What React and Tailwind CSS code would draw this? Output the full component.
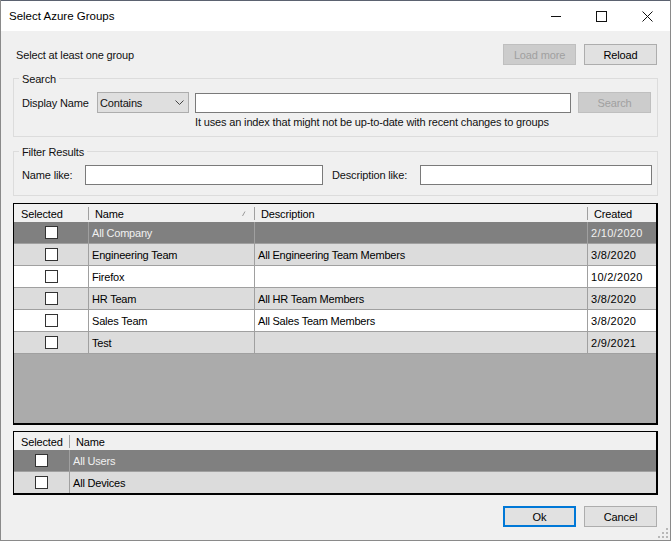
import React from "react";

const groups = [
  { name: "All Company", description: "", created: "2/10/2020", kind: "selected" },
  { name: "Engineering Team", description: "All Engineering Team Members", created: "3/8/2020", kind: "alt" },
  { name: "Firefox", description: "", created: "10/2/2020", kind: "plain" },
  { name: "HR Team", description: "All HR Team Members", created: "3/8/2020", kind: "alt" },
  { name: "Sales Team", description: "All Sales Team Members", created: "3/8/2020", kind: "plain" },
  { name: "Test", description: "", created: "2/9/2021", kind: "alt" },
];

const rowColors = {
  selected: "bg-[#808080] text-[#f0f0f0]",
  alt: "bg-[#dcdcdc] text-black",
  plain: "bg-white text-black",
};

function Checkbox() {
  return <span className="block w-[13px] h-[13px] bg-white border border-[#333333]" />;
}

function Cell({ className = "", children }) {
  return (
    <div className={`h-[22px] flex items-center border-b border-r border-[#a0a0a0] overflow-hidden whitespace-nowrap tracking-[-0.2px] ${className}`}>
      {children}
    </div>
  );
}

function HeaderCell({ className = "", children }) {
  return <div className={`relative h-[18px] pt-[2px] flex items-center bg-[#f0f0f0] text-black whitespace-nowrap ${className}`}>{children}</div>;
}

function HeaderDivider() {
  return <span className="absolute -left-px top-[3px] h-[13px] w-px bg-[#a0a0a0]" />;
}

function WinButton({ children, disabled, primary, className = "" }) {
  const look = primary
    ? "border-2 border-[#0078d7] bg-[#e1e1e1] text-black"
    : disabled
      ? "border border-[#bfbfbf] bg-[#cccccc] text-[#a0a0a0]"
      : "border border-[#adadad] bg-[#e1e1e1] text-black";
  return <button className={`w-[73px] h-[21px] flex items-center justify-center ${look} ${className}`}>{children}</button>;
}

function TextBox({ className = "" }) {
  return <div className={`h-[20px] bg-white border border-[#7a7a7a] ${className}`} />;
}

export default function App() {
  return (
    <div className="w-[671px] h-[541px] flex flex-col bg-[#f0f0f0] border-x border-b border-[#8a8a8a] text-[11px] tracking-[-0.15px] leading-[14px] text-[#111111] font-['Liberation_Sans',Arial,sans-serif] overflow-hidden relative">
      {/* Title bar */}
      <div className="h-[31px] shrink-0 flex items-center bg-white border-t border-[#5b6270]">
        <span className="ml-[8px] grow text-black text-[11.5px] tracking-normal">Select Azure Groups</span>
        <svg width="10" height="10" viewBox="0 0 10 10" className="mr-[35px]" stroke="#111" fill="none" strokeWidth="1">
          <path d="M0 5.5h10" />
        </svg>
        <svg width="11" height="11" viewBox="0 0 11 11" className="mr-[35px]" stroke="#111" fill="none" strokeWidth="1">
          <rect x="0.5" y="0.5" width="10" height="10" />
        </svg>
        <svg width="11" height="11" viewBox="0 0 11 11" className="mr-[17px]" stroke="#111" fill="none" strokeWidth="1">
          <path d="M0.5 0.5l10 10M10.5 0.5l-10 10" />
        </svg>
      </div>

      <div className="flex-1 flex flex-col pl-[12px] pr-[12px]">
        {/* Top row */}
        <div className="h-[21px] mt-[13px] flex items-center">
          <span className="ml-[3px] grow">Select at least one group</span>
          <div className="flex gap-[8px] mr-[1px]">
            <WinButton disabled>Load more</WinButton>
            <WinButton>Reload</WinButton>
          </div>
        </div>

        {/* Search group */}
        <fieldset className="mt-[6px] h-[66px] border border-[#dcdcdc] relative pl-[8px]">
          <legend className="-ml-[3px] px-[3px] h-[14px] -mt-[1px]"><span className="block translate-y-px">Search</span></legend>
          <div className="flex items-center mt-[7px] pr-[6px]">
            <span className="w-[75px]">Display Name</span>
            <div className="w-[92px] h-[21px] flex items-center justify-between bg-[#dfdfdf] border border-[#adadad] pl-[2px] pr-[4px]">
              <span>Contains</span>
              <svg width="9" height="5" viewBox="0 0 9 5" fill="none" stroke="#444" strokeWidth="1">
                <path d="M0.5 0.5l4 4 4-4" />
              </svg>
            </div>
            <TextBox className="w-[376px] ml-[6px]" />
            <WinButton disabled className="ml-[7px]">Search</WinButton>
          </div>
          <p className="ml-[173px] mt-[2px]">It uses an index that might not be up-to-date with recent changes to groups</p>
        </fieldset>

        {/* Filter group */}
        <fieldset className="mt-[7px] h-[52px] border border-[#dcdcdc] pl-[8px]">
          <legend className="-ml-[3px] px-[3px] h-[14px] -mt-[1px]"><span className="block translate-y-px">Filter Results</span></legend>
          <div className="flex items-center mt-[7px]">
            <span className="w-[63px]">Name like:</span>
            <TextBox className="w-[238px]" />
            <span className="w-[88px] ml-[9px]">Description like:</span>
            <TextBox className="w-[232px]" />
          </div>
        </fieldset>

        {/* Groups table */}
        <div className="mt-[7px] h-[222px] border border-black border-r-2 border-b-2 bg-[#ababab] overflow-hidden">
          <div className="grid grid-cols-[75px_166px_333px_1fr]">
            <HeaderCell className="pl-[7px]">Selected</HeaderCell>
            <HeaderCell className="pl-[6px]">
              <HeaderDivider />
              Name
              <svg width="4" height="5" viewBox="0 0 4 5" className="absolute right-[9px] top-[7px]" stroke="#999" fill="none">
                <path d="M0.5 5L3 0.5" />
              </svg>
            </HeaderCell>
            <HeaderCell className="pl-[6px]">
              <HeaderDivider />
              Description
            </HeaderCell>
            <HeaderCell className="pl-[6px]">
              <HeaderDivider />
              Created
            </HeaderCell>
            {groups.map((g) => (
              <React.Fragment key={g.name}>
                <Cell className={`justify-center ${rowColors[g.kind]}`}>
                  <Checkbox />
                </Cell>
                <Cell className={`pl-[3px] ${rowColors[g.kind]}`}>{g.name}</Cell>
                <Cell className={`pl-[3px] ${rowColors[g.kind]}`}>{g.description}</Cell>
                <Cell className={`pl-[3px] border-r-0 ${rowColors[g.kind]}`}>
                  <span className="tracking-[0.3px]">{g.created}</span>
                </Cell>
              </React.Fragment>
            ))}
          </div>
        </div>

        {/* Built-in groups table */}
        <div className="mt-[6px] h-[64px] border border-black border-r-2 border-b-2 bg-[#ababab] overflow-hidden">
          <div className="grid grid-cols-[56px_1fr]">
            <HeaderCell className="pl-[7px]">Selected</HeaderCell>
            <HeaderCell className="pl-[6px]">
              <HeaderDivider />
              Name
            </HeaderCell>
            <Cell className={`justify-center ${rowColors.selected}`}>
              <Checkbox />
            </Cell>
            <Cell className={`pl-[3px] border-r-0 ${rowColors.selected}`}>All Users</Cell>
            <Cell className={`justify-center ${rowColors.alt}`}>
              <Checkbox />
            </Cell>
            <Cell className={`pl-[3px] border-r-0 ${rowColors.alt}`}>All Devices</Cell>
          </div>
        </div>

        {/* Footer */}
        <div className="mt-[11px] flex justify-end gap-[8px] mr-[1px]">
          <WinButton primary>Ok</WinButton>
          <WinButton>Cancel</WinButton>
        </div>
      </div>

      {/* Resize grip */}
      <svg width="11" height="11" viewBox="0 0 11 11" className="absolute right-[1px] bottom-[1px]" fill="#b8b8b8">
        <rect x="8" y="0" width="2" height="2" />
        <rect x="4" y="4" width="2" height="2" />
        <rect x="8" y="4" width="2" height="2" />
        <rect x="0" y="8" width="2" height="2" />
        <rect x="4" y="8" width="2" height="2" />
        <rect x="8" y="8" width="2" height="2" />
      </svg>
    </div>
  );
}
